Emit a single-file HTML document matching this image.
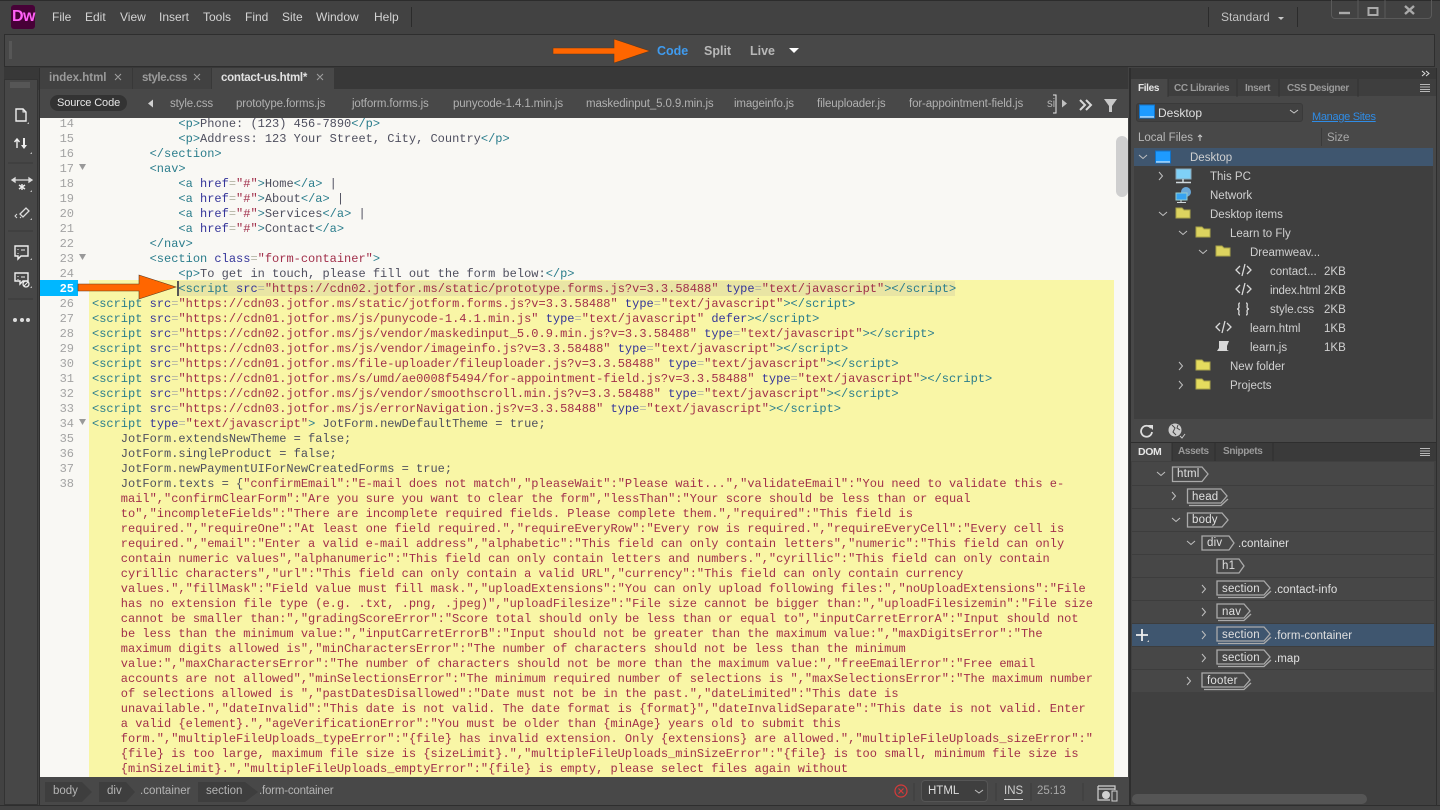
<!DOCTYPE html>
<html><head><meta charset="utf-8"><title>Dreamweaver</title>
<style>
html,body{margin:0;padding:0;width:1440px;height:810px;overflow:hidden;background:#424242}
body{position:relative;font-family:"Liberation Sans",sans-serif;font-size:12px;color:#ccc}
.x{position:absolute;white-space:nowrap;line-height:16px;z-index:2}
.b{position:absolute}
svg{position:absolute;left:0;top:0}
#code{position:absolute;left:92px;top:117px;font-family:"Liberation Mono",monospace;font-size:12px;line-height:15px;color:#4f4f5f}
#code div{height:15px;white-space:pre}
i{font-style:normal}
.t{color:#2b7d8c}.a{color:#35359a}.s{color:#a12f4b}.e{color:#b5b5a5}
.n{position:absolute;left:40px;width:34px;margin-top:1px;text-align:right;font-family:"Liberation Mono",monospace;font-size:12px;line-height:15px;color:#a3a3a3}
.m{font-size:12px;color:#d4d4d4;top:9px}
.f{top:96px;color:#b0b0b0;font-size:11.5px;letter-spacing:-.12px}
.r{color:#d0d0d0;font-size:11.5px;margin-top:1px}
.z{color:#d0d0d0;font-size:11.5px;left:1324px;margin-top:1px}
.d{color:#e0e0e0;font-size:11.5px;letter-spacing:.05px;margin-top:1px}
.h{color:#e0e0e0;font-size:11.5px;letter-spacing:.2px;margin-top:1px}
.pt{font-weight:bold;font-size:10px;letter-spacing:-.35px;color:#9a9a9a}
</style></head><body>
<!-- frames -->
<div class="b" style="left:0;top:0;width:1440px;height:1px;background:#2c2c2c"></div>
<div class="b" style="left:4px;top:34px;width:1431px;height:33px;background:#484848;border-top:1px solid #2e2e2e;border-bottom:1px solid #2e2e2e;border-left:1px solid #2e2e2e;border-right:1px solid #2e2e2e;box-sizing:border-box"></div>
<div class="b" style="left:4px;top:67px;width:1124px;height:23px;background:#383838"></div>
<div class="b" style="left:1131px;top:68px;width:305px;height:11px;background:#383838"></div>
<div class="b" style="left:0;top:79px;width:38px;height:731px;background:#424242"></div>
<div class="b" style="left:4px;top:79px;width:34px;height:726px;background:#474747;border:1px solid #333;box-sizing:border-box"></div>
<div class="b" style="left:39px;top:68px;width:1px;height:737px;background:#2e2e2e"></div>
<div class="b" style="left:0;top:805px;width:1440px;height:5px;background:#424242;border-top:1px solid #2e2e2e;box-sizing:border-box"></div>
<div class="b" style="left:1436px;top:68px;width:1px;height:737px;background:#2e2e2e"></div>
<div class="b" style="left:1129px;top:68px;width:2px;height:737px;background:#2e2e2e"></div>

<!-- title bar -->
<div class="b" style="left:11px;top:5px;width:24px;height:24px;background:#470137;border-radius:3px"></div>
<div class="x" style="left:12px;top:8px;width:22px;text-align:center;font-weight:bold;font-size:16px;line-height:18px;color:#ff61f6;letter-spacing:-.5px">Dw</div>
<div class="x m" style="left:52px">File</div>
<div class="x m" style="left:85px">Edit</div>
<div class="x m" style="left:120px">View</div>
<div class="x m" style="left:159px">Insert</div>
<div class="x m" style="left:203px">Tools</div>
<div class="x m" style="left:245px">Find</div>
<div class="x m" style="left:282px">Site</div>
<div class="x m" style="left:316px">Window</div>
<div class="x m" style="left:374px">Help</div>
<div class="b" style="left:411px;top:7px;width:1px;height:20px;background:#2b2b2b"></div>
<div class="b" style="left:1208px;top:7px;width:1px;height:20px;background:#2b2b2b"></div>
<div class="b" style="left:1297px;top:7px;width:1px;height:20px;background:#2b2b2b"></div>
<div class="x" style="left:1221px;top:9px;color:#c4c4c4">Standard</div>
<div class="b" style="left:1331px;top:0;width:101px;height:19px;border:1px solid #5a5a5a;border-top:0;border-radius:0 0 4px 4px;box-sizing:border-box"></div>

<!-- view switch -->
<div class="x" style="left:657px;top:43px;font-weight:bold;font-size:12.5px;color:#3f9bef">Code</div>
<div class="x" style="left:704px;top:43px;font-weight:bold;font-size:12.5px;color:#b8b8b8">Split</div>
<div class="x" style="left:750px;top:43px;font-weight:bold;font-size:12.5px;color:#b8b8b8">Live</div>

<!-- document tabs -->
<div class="b" style="left:40px;top:68px;width:92px;height:21px;background:#414141"></div>
<div class="b" style="left:133px;top:68px;width:78px;height:21px;background:#414141"></div>
<div class="b" style="left:212px;top:68px;width:122px;height:21px;background:#484848"></div>
<div class="x" style="left:49px;top:70px;font-weight:bold;font-size:11.5px;color:#9b9b9b">index.html</div>
<div class="x" style="left:142px;top:70px;font-weight:bold;font-size:11.5px;letter-spacing:-.4px;color:#9b9b9b">style.css</div>
<div class="x" style="left:221px;top:70px;font-weight:bold;font-size:11.5px;letter-spacing:-.25px;color:#e2e2e2">contact-us.html*</div>
<!-- related files -->
<div class="b" style="left:40px;top:89px;width:1089px;height:29px;background:#484848"></div>
<div class="b" style="left:50px;top:95px;width:77px;height:16px;background:#333;border-radius:8px"></div>
<div class="x" style="left:57px;top:95px;font-size:11px;letter-spacing:-.1px;color:#e6e6e6">Source Code</div>
<div class="x f" style="left:170px">style.css</div>
<div class="x f" style="left:236px">prototype.forms.js</div>
<div class="x f" style="left:352px">jotform.forms.js</div>
<div class="x f" style="left:453px">punycode-1.4.1.min.js</div>
<div class="x f" style="left:586px">maskedinput_5.0.9.min.js</div>
<div class="x f" style="left:734px">imageinfo.js</div>
<div class="x f" style="left:817px">fileuploader.js</div>
<div class="x f" style="left:909px">for-appointment-field.js</div>
<div class="x f" style="left:1047px">si</div>

<!-- editor -->
<div class="b" style="left:40px;top:118px;width:1088px;height:659px;background:#f9f8f4;overflow:hidden"></div>
<div class="b" style="left:89px;top:280px;width:1025px;height:497px;background:#f9f6a6"></div>
<div class="b" style="left:179px;top:281px;width:776px;height:15px;background:#e9e5a4"></div>
<div class="b" style="left:40px;top:280px;width:38px;height:16px;background:#00b7ff"></div>
<div class="b" style="left:177px;top:281px;width:2px;height:15px;background:#555"></div>
<div class="b" style="left:1116px;top:136px;width:12px;height:61px;background:#cfcfcf;border-radius:6px"></div>

<div class="n" style="top:116px">14</div><div class="n" style="top:131px">15</div><div class="n" style="top:146px">16</div><div class="n" style="top:161px">17</div><div class="n" style="top:176px">18</div><div class="n" style="top:191px">19</div><div class="n" style="top:206px">20</div><div class="n" style="top:221px">21</div><div class="n" style="top:236px">22</div><div class="n" style="top:251px">23</div><div class="n" style="top:266px">24</div><div class="n" style="top:281px;color:#fff;font-weight:bold">25</div><div class="n" style="top:296px">26</div><div class="n" style="top:311px">27</div><div class="n" style="top:326px">28</div><div class="n" style="top:341px">29</div><div class="n" style="top:356px">30</div><div class="n" style="top:371px">31</div><div class="n" style="top:386px">32</div><div class="n" style="top:401px">33</div><div class="n" style="top:416px">34</div><div class="n" style="top:431px">35</div><div class="n" style="top:446px">36</div><div class="n" style="top:461px">37</div><div class="n" style="top:476px">38</div>

<div id="code" style="height:660px;overflow:hidden;width:1024px">
<div>            <i class="t">&lt;p&gt;</i>Phone: (123) 456-7890<i class="t">&lt;/p&gt;</i></div>
<div>            <i class="t">&lt;p&gt;</i>Address: 123 Your Street, City, Country<i class="t">&lt;/p&gt;</i></div>
<div>        <i class="t">&lt;/section&gt;</i></div>
<div>        <i class="t">&lt;nav&gt;</i></div>
<div>            <i class="t">&lt;a</i> <i class="a">href</i><i class="e">=</i><i class="s">"#"</i><i class="t">&gt;</i>Home<i class="t">&lt;/a&gt;</i> |</div>
<div>            <i class="t">&lt;a</i> <i class="a">href</i><i class="e">=</i><i class="s">"#"</i><i class="t">&gt;</i>About<i class="t">&lt;/a&gt;</i> |</div>
<div>            <i class="t">&lt;a</i> <i class="a">href</i><i class="e">=</i><i class="s">"#"</i><i class="t">&gt;</i>Services<i class="t">&lt;/a&gt;</i> |</div>
<div>            <i class="t">&lt;a</i> <i class="a">href</i><i class="e">=</i><i class="s">"#"</i><i class="t">&gt;</i>Contact<i class="t">&lt;/a&gt;</i></div>
<div>        <i class="t">&lt;/nav&gt;</i></div>
<div>        <i class="t">&lt;section</i> <i class="a">class</i><i class="e">=</i><i class="s">"form-container"</i><i class="t">&gt;</i></div>
<div>            <i class="t">&lt;p&gt;</i>To get in touch, please fill out the form below:<i class="t">&lt;/p&gt;</i></div>
<div>            <i class="t">&lt;script</i> <i class="a">src</i><i class="e">=</i><i class="s">"https://cdn02.jotfor.ms/static/prototype.forms.js?v=3.3.58488"</i> <i class="a">type</i><i class="e">=</i><i class="s">"text/javascript"</i><i class="t">&gt;&lt;/script&gt;</i></div>
<div><i class="t">&lt;script</i> <i class="a">src</i><i class="e">=</i><i class="s">"https://cdn03.jotfor.ms/static/jotform.forms.js?v=3.3.58488"</i> <i class="a">type</i><i class="e">=</i><i class="s">"text/javascript"</i><i class="t">&gt;&lt;/script&gt;</i></div>
<div><i class="t">&lt;script</i> <i class="a">src</i><i class="e">=</i><i class="s">"https://cdn01.jotfor.ms/js/punycode-1.4.1.min.js"</i> <i class="a">type</i><i class="e">=</i><i class="s">"text/javascript"</i> <i class="a">defer</i><i class="t">&gt;&lt;/script&gt;</i></div>
<div><i class="t">&lt;script</i> <i class="a">src</i><i class="e">=</i><i class="s">"https://cdn02.jotfor.ms/js/vendor/maskedinput_5.0.9.min.js?v=3.3.58488"</i> <i class="a">type</i><i class="e">=</i><i class="s">"text/javascript"</i><i class="t">&gt;&lt;/script&gt;</i></div>
<div><i class="t">&lt;script</i> <i class="a">src</i><i class="e">=</i><i class="s">"https://cdn03.jotfor.ms/js/vendor/imageinfo.js?v=3.3.58488"</i> <i class="a">type</i><i class="e">=</i><i class="s">"text/javascript"</i><i class="t">&gt;&lt;/script&gt;</i></div>
<div><i class="t">&lt;script</i> <i class="a">src</i><i class="e">=</i><i class="s">"https://cdn01.jotfor.ms/file-uploader/fileuploader.js?v=3.3.58488"</i> <i class="a">type</i><i class="e">=</i><i class="s">"text/javascript"</i><i class="t">&gt;&lt;/script&gt;</i></div>
<div><i class="t">&lt;script</i> <i class="a">src</i><i class="e">=</i><i class="s">"https://cdn01.jotfor.ms/s/umd/ae0008f5494/for-appointment-field.js?v=3.3.58488"</i> <i class="a">type</i><i class="e">=</i><i class="s">"text/javascript"</i><i class="t">&gt;&lt;/script&gt;</i></div>
<div><i class="t">&lt;script</i> <i class="a">src</i><i class="e">=</i><i class="s">"https://cdn02.jotfor.ms/js/vendor/smoothscroll.min.js?v=3.3.58488"</i> <i class="a">type</i><i class="e">=</i><i class="s">"text/javascript"</i><i class="t">&gt;&lt;/script&gt;</i></div>
<div><i class="t">&lt;script</i> <i class="a">src</i><i class="e">=</i><i class="s">"https://cdn03.jotfor.ms/js/errorNavigation.js?v=3.3.58488"</i> <i class="a">type</i><i class="e">=</i><i class="s">"text/javascript"</i><i class="t">&gt;&lt;/script&gt;</i></div>
<div><i class="t">&lt;script</i> <i class="a">type</i><i class="e">=</i><i class="s">"text/javascript"</i><i class="t">&gt;</i> JotForm.newDefaultTheme = true;</div>
<div>    JotForm.extendsNewTheme = false;</div>
<div>    JotForm.singleProduct = false;</div>
<div>    JotForm.newPaymentUIForNewCreatedForms = true;</div>
<div>    JotForm.texts = {<i class="s">"confirmEmail":"E-mail does not match","pleaseWait":"Please wait...","validateEmail":"You need to validate this e-</i></div>
<div class="s">    mail","confirmClearForm":"Are you sure you want to clear the form","lessThan":"Your score should be less than or equal</div>
<div class="s">    to","incompleteFields":"There are incomplete required fields. Please complete them.","required":"This field is</div>
<div class="s">    required.","requireOne":"At least one field required.","requireEveryRow":"Every row is required.","requireEveryCell":"Every cell is</div>
<div class="s">    required.","email":"Enter a valid e-mail address","alphabetic":"This field can only contain letters","numeric":"This field can only</div>
<div class="s">    contain numeric values","alphanumeric":"This field can only contain letters and numbers.","cyrillic":"This field can only contain</div>
<div class="s">    cyrillic characters","url":"This field can only contain a valid URL","currency":"This field can only contain currency</div>
<div class="s">    values.","fillMask":"Field value must fill mask.","uploadExtensions":"You can only upload following files:","noUploadExtensions":"File</div>
<div class="s">    has no extension file type (e.g. .txt, .png, .jpeg)","uploadFilesize":"File size cannot be bigger than:","uploadFilesizemin":"File size</div>
<div class="s">    cannot be smaller than:","gradingScoreError":"Score total should only be less than or equal to","inputCarretErrorA":"Input should not</div>
<div class="s">    be less than the minimum value:","inputCarretErrorB":"Input should not be greater than the maximum value:","maxDigitsError":"The</div>
<div class="s">    maximum digits allowed is","minCharactersError":"The number of characters should not be less than the minimum</div>
<div class="s">    value:","maxCharactersError":"The number of characters should not be more than the maximum value:","freeEmailError":"Free email</div>
<div class="s">    accounts are not allowed","minSelectionsError":"The minimum required number of selections is ","maxSelectionsError":"The maximum number</div>
<div class="s">    of selections allowed is ","pastDatesDisallowed":"Date must not be in the past.","dateLimited":"This date is</div>
<div class="s">    unavailable.","dateInvalid":"This date is not valid. The date format is {format}","dateInvalidSeparate":"This date is not valid. Enter</div>
<div class="s">    a valid {element}.","ageVerificationError":"You must be older than {minAge} years old to submit this</div>
<div class="s">    form.","multipleFileUploads_typeError":"{file} has invalid extension. Only {extensions} are allowed.","multipleFileUploads_sizeError":"</div>
<div class="s">    {file} is too large, maximum file size is {sizeLimit}.","multipleFileUploads_minSizeError":"{file} is too small, minimum file size is</div>
<div class="s">    {minSizeLimit}.","multipleFileUploads_emptyError":"{file} is empty, please select files again without</div>
</div>

<!-- status bar -->
<div class="b" style="left:40px;top:777px;width:1089px;height:28px;background:#484848"></div>
<div class="x" style="left:53px;top:783px;color:#b4b4b4;font-size:11.5px">body</div>
<div class="x" style="left:107px;top:783px;color:#b4b4b4;font-size:11.5px">div</div>
<div class="x" style="left:140px;top:783px;color:#b4b4b4;font-size:11.5px">.container</div>
<div class="x" style="left:206px;top:783px;color:#b4b4b4;font-size:11.5px">section</div>
<div class="x" style="left:259px;top:783px;color:#b4b4b4;font-size:11.5px;letter-spacing:-.2px">.form-container</div>
<div class="b" style="left:921px;top:780px;width:67px;height:22px;background:#3f3f3f;border:1px solid #555;border-radius:4px;box-sizing:border-box"></div>
<div class="x" style="left:928px;top:783px;color:#dcdcdc;font-size:11.5px">HTML</div>
<div class="x" style="left:1004px;top:783px;color:#d0d0d0;font-size:11.5px">INS</div>
<div class="b" style="left:1004px;top:799px;width:19px;height:1px;background:#ccc"></div>
<div class="x" style="left:1037px;top:783px;color:#a8a8a8;font-size:11.5px">25:13</div>

<!-- right panel : files -->
<div class="b" style="left:1131px;top:79px;width:305px;height:363px;background:#484848"></div>
<div class="b" style="left:1131px;top:79px;width:305px;height:17px;background:#3e3e3e"></div>
<div class="b" style="left:1131px;top:79px;width:37px;height:18px;background:#484848"></div>
<div class="x pt" style="left:1138px;top:81px;color:#e6e6e6">Files</div>
<div class="x pt" style="left:1174px;top:81px">CC Libraries</div>
<div class="x pt" style="left:1245px;top:81px">Insert</div>
<div class="x pt" style="left:1287px;top:81px">CSS Designer</div>
<div class="b" style="left:1136px;top:103px;width:167px;height:19px;background:#414141;border:1px solid #3a3a3a;border-radius:3px;box-sizing:border-box"></div>
<div class="x" style="left:1158px;top:105px;color:#e0e0e0">Desktop</div>
<div class="x" style="left:1312px;top:109px;color:#2f8ce6;font-size:11px;letter-spacing:-.3px;text-decoration:underline">Manage Sites</div>
<div class="x" style="left:1138px;top:130px;color:#b8b8b8;font-size:11.5px">Local Files</div>
<div class="x" style="left:1327px;top:130px;color:#a8a8a8;font-size:11.5px">Size</div>
<div class="b" style="left:1321px;top:128px;width:1px;height:18px;background:#3a3a3a"></div>
<div class="b" style="left:1134px;top:148px;width:299px;height:271px;background:#3f3f3f"></div>
<div class="b" style="left:1134px;top:148px;width:299px;height:18px;background:#3f566f"></div>
<div class="x r" style="left:1190px;top:149px">Desktop</div>
<div class="x r" style="left:1210px;top:168px">This PC</div>
<div class="x r" style="left:1210px;top:187px">Network</div>
<div class="x r" style="left:1210px;top:206px">Desktop items</div>
<div class="x r" style="left:1230px;top:225px">Learn to Fly</div>
<div class="x r" style="left:1250px;top:244px">Dreamweav...</div>
<div class="x r" style="left:1270px;top:263px">contact...</div>
<div class="x r" style="left:1270px;top:282px;letter-spacing:-.2px">index.html</div>
<div class="x r" style="left:1270px;top:301px">style.css</div>
<div class="x r" style="left:1250px;top:320px">learn.html</div>
<div class="x r" style="left:1250px;top:339px">learn.js</div>
<div class="x r" style="left:1230px;top:358px">New folder</div>
<div class="x r" style="left:1230px;top:377px">Projects</div>
<div class="x z" style="top:263px">2KB</div>
<div class="x z" style="top:282px">2KB</div>
<div class="x z" style="top:301px">2KB</div>
<div class="x z" style="top:320px">1KB</div>
<div class="x z" style="top:339px">1KB</div>

<!-- right panel : DOM -->
<div class="b" style="left:1131px;top:442px;width:305px;height:363px;background:#404040;border-top:1px solid #2e2e2e;box-sizing:border-box"></div>
<div class="b" style="left:1131px;top:443px;width:305px;height:18px;background:#3a3a3a"></div>
<div class="b" style="left:1131px;top:443px;width:41px;height:18px;background:#484848"></div>
<div class="x pt" style="left:1138px;top:444px;color:#e6e6e6;font-size:10.5px">DOM</div>
<div class="x pt" style="left:1178px;top:444px">Assets</div>
<div class="x pt" style="left:1223px;top:444px">Snippets</div>
<div class="b" style="left:1132px;top:462px;width:302px;height:230px;background:#474747"></div>
<div class="b" style="left:1132px;top:624px;width:302px;height:22px;background:#3f566f"></div>
<div class="b" style="left:1132px;top:794px;width:235px;height:10px;background:#555;border-radius:5px"></div>
<div class="x h" style="left:1177px;top:465px">html</div>
<div class="x h" style="left:1192px;top:488px">head</div>
<div class="x h" style="left:1192px;top:511px">body</div>
<div class="x h" style="left:1207px;top:534px">div</div>
<div class="x d" style="left:1238px;top:535px">.container</div>
<div class="x h" style="left:1222px;top:557px">h1</div>
<div class="x h" style="left:1222px;top:580px">section</div>
<div class="x d" style="left:1274px;top:581px">.contact-info</div>
<div class="x h" style="left:1222px;top:603px">nav</div>
<div class="x h" style="left:1222px;top:626px">section</div>
<div class="x d" style="left:1274px;top:627px">.form-container</div>
<div class="x h" style="left:1222px;top:649px">section</div>
<div class="x d" style="left:1274px;top:650px">.map</div>
<div class="x h" style="left:1207px;top:672px">footer</div>

<!-- vector overlay -->
<svg width="1440" height="810" viewBox="0 0 1440 810" fill="none">
<!-- window buttons -->
<path d="M1358 0V19M1385 0V19" stroke="#5a5a5a"/>
<path d="M1339 13H1350" stroke="#aaa" stroke-width="2.4"/>
<rect x="1368.5" y="8" width="9" height="7" stroke="#aaa" stroke-width="2"/>
<path d="M1405 6L1414 14M1414 6L1405 14" stroke="#aaa" stroke-width="2.4"/>
<path d="M1278 17h6l-3 3z" fill="#c8c8c8"/>
<path d="M789 48h10l-5 5z" fill="#fff"/>
<!-- grips -->
<path d="M9 42H12M9 44H12M9 46H12M9 48H12M9 50H12M9 52H12M9 54H12M9 56H12M9 58H12" stroke="#666"/>
<path d="M11 82V88M13 82V88M15 82V88M17 82V88M19 82V88M21 82V88M23 82V88M25 82V88M27 82V88M29 82V88" stroke="#666"/>
<!-- tab x -->
<path d="M115 74l6 6M121 74l-6 6M194 74l6 6M200 74l-6 6M317 74l6 6M323 74l-6 6" stroke="#a0a0a0"/>
<!-- toolbar right icons -->
<path d="M153 99.500v8l-5 -4z" fill="#d0d0d0"/>
<path d="M1062 99.500v8l5 -4z" fill="#c0c0c0"/>
<path d="M1053 95h3v18h-3" stroke="#e8e8e8"/>
<path d="M1080 100l5 5 -5 5M1086 100l5 5 -5 5" stroke="#d8d8d8" stroke-width="2"/>
<path d="M1104 99h13l-5 7v6l-3 0v-6z" fill="#c8c8c8"/>
<!-- left toolbar icons -->
<path d="M16 109h7l3 3v9H16z" stroke="#eee" stroke-width="1.400"/>
<path d="M23 109v3h3" stroke="#eee"/>
<path d="M17 148v-9M14.500 142l2.500 -3 2.500 3" stroke="#eee" stroke-width="1.400"/>
<path d="M24 138v9" stroke="#eee" stroke-width="2"/><path d="M21 145h6l-3 4z" fill="#eee"/>
<path d="M15 180h20M15 180l3 -2v4zM35 180l-3 -2v4z" stroke="#ddd" stroke-width="1.300" transform="translate(-3 0)"/>
<path d="M22 184v6M19 185l6 4M25 185l-6 4" stroke="#eee" stroke-width="1.400"/>
<path d="M20 214l6 -6 3 3 -6 6z" stroke="#ddd" stroke-width="1.300"/>
<path d="M17 214l-2 2 2 2M21 218l-1 -1" stroke="#ddd"/>
<path d="M15 246h13v10h-7l-3 3v-3h-3z" stroke="#eee" stroke-width="1.400"/>
<path d="M18 249v1M18 253v1M21 250h4" stroke="#eee"/>
<path d="M15 273h13v8h-5l-3 3v-3h-5z" stroke="#eee" stroke-width="1.400"/>
<path d="M18 276v1M18 279v1M21 277h4" stroke="#eee"/>
<circle cx="26" cy="284" r="3" stroke="#eee" stroke-width="1.300"/><path d="M24 286l4 -4" stroke="#eee"/>
<circle cx="15" cy="320" r="2" fill="#ddd"/><circle cx="22" cy="320" r="2" fill="#ddd"/><circle cx="28" cy="320" r="2" fill="#ddd"/>
<path d="M8 163H33M8 231H33M8 299H33" stroke="#3a3a3a"/>
<path d="M29 122v2h-2zM32 152v2h-2zM32 190v2h-2zM32 218v2h-2zM32 258v2h-2zM32 286v2h-2z" fill="#bbb"/>
<!-- fold markers -->
<path d="M79 164h7l-3.500 6z" fill="#999"/><path d="M79 254h7l-3.500 6z" fill="#999"/><path d="M79 419h7l-3.500 6z" fill="#999"/>
<!-- breadcrumbs -->
<path d="M45 782h37l10 10 -10 10H45z" fill="#3e3e3e"/>
<path d="M99 782h27l9 10 -9 10H99z" fill="#3e3e3e"/>
<path d="M198 782h47l13 10 -13 10H198z" fill="#3e3e3e"/>
<!-- status icons -->
<circle cx="901" cy="791" r="6" stroke="#d63a3a" stroke-width="1.200"/><path d="M898.500 788.500l5 5M903.500 788.500l-5 5" stroke="#d63a3a" stroke-width="1.200"/>
<path d="M914 783V801M996 783V801M1031 783V801M1083 783V801" stroke="#3c3c3c"/>
<path d="M975 790l4 3 4 -3" stroke="#c0c0c0"/>
<path d="M1098 786h17v4M1098 786v14h12M1098 789h17" stroke="#d0d0d0" stroke-width="1.200"/>
<circle cx="1106" cy="795" r="4" fill="#d0d0d0"/>
<rect x="1112" y="791" width="5" height="10" fill="#484848" stroke="#d0d0d0"/>
<!-- right panel top -->
<path d="M1422 71l3 2.500 -3 2.500M1426 71l3 2.500 -3 2.500" stroke="#ddd"/>
<path d="M1420 84.500H1430M1420 87H1430M1420 89.500H1430M1420 91.500H1430" stroke="#b8b8b8"/>
<path d="M1420 448.500H1430M1420 451H1430M1420 453.500H1430M1420 455.500H1430" stroke="#b8b8b8"/>
<path d="M1168 79V97M1237 79V97M1279 79V97M1358 79V97" stroke="#333"/>
<path d="M1172 443V461M1215 443V461M1273 443V461" stroke="#2f2f2f"/>
<path d="M1293 110l4 3 4 -3" stroke="#c8c8c8" transform="translate(-3 0)"/>
<path d="M1200 135v6M1198 137l2 -2 2 2" stroke="#ccc"/>
<!-- desktop icons -->
<rect x="1139.500" y="105" width="15" height="13" fill="#1e9bff" stroke="#1173c9"/><path d="M1140 117h14" stroke="#fff"/>
<rect x="1155.500" y="151" width="15" height="12" fill="#1e9bff" stroke="#1173c9"/><path d="M1156 162h14" stroke="#fff"/>
<!-- This PC -->
<rect x="1176" y="169" width="15" height="10" fill="#7fd0f7" stroke="#8ab"/><path d="M1183 179v3M1176 182.500H1191" stroke="#cfd8dc" stroke-width="1.500"/>
<!-- Network -->
<circle cx="1186" cy="192" r="5" fill="#6aa8d8"/><rect x="1176" y="193" width="11" height="7" fill="#36a3f0" stroke="#9cc"/><path d="M1181 200v2M1177 202.500H1186" stroke="#cfd8dc"/>
<!-- folders -->
<path d="M1176 208h6l2 2h6v8h-14z" fill="#dcd35f" stroke="#a9a34a"/>
<path d="M1196 227h6l2 2h6v8h-14z" fill="#dcd35f" stroke="#a9a34a"/>
<path d="M1216 246h6l2 2h6v8h-14z" fill="#dcd35f" stroke="#a9a34a"/>
<path d="M1196 360h6l2 2h6v8h-14z" fill="#e5dc5e" stroke="#a9a34a"/>
<path d="M1196 379h6l2 2h6v8h-14z" fill="#e5dc5e" stroke="#a9a34a"/>
<!-- tree chevrons -->
<path d="M1139 155l4 3.500 4 -3.500" stroke="#c0c0c0"/>
<path d="M1159 172l3.500 4 -3.500 4" stroke="#c0c0c0"/>
<path d="M1159 212l4 3.500 4 -3.500" stroke="#c0c0c0"/>
<path d="M1179 231l4 3.500 4 -3.500" stroke="#c0c0c0"/>
<path d="M1199 250l4 3.500 4 -3.500" stroke="#c0c0c0"/>
<path d="M1179 362l3.500 4 -3.500 4" stroke="#c0c0c0"/>
<path d="M1179 381l3.500 4 -3.500 4" stroke="#c0c0c0"/>
<!-- file icons -->
<g stroke="#d8d8d8" stroke-width="1.300">
<path d="M1240 266l-4 4 4 4M1247 266l4 4 -4 4M1245 264l-3 12"/>
<path d="M1240 285l-4 4 4 4M1247 285l4 4 -4 4M1245 283l-3 12"/>
<path d="M1220 323l-4 4 4 4M1227 323l4 4 -4 4M1225 321l-3 12"/>
<path d="M1240 303c-2 0-1 3-1 4s-1 2-2 2c1 0 2 1 2 2s-1 4 1 4M1246 303c2 0 1 3 1 4s1 2 2 2c-1 0-2 1-2 2s1 4-1 4"/>
</g>
<path d="M1219 341h10l-2 5v4l2 1h-12l2-3z" fill="#d8d8d8"/>
<!-- files bottom icons -->
<path d="M1151 428a5.500 5.500 0 1 0 1 4" stroke="#ddd" stroke-width="1.800"/><path d="M1148 425l5 0 0 5z" fill="#ddd"/>
<circle cx="1175" cy="430" r="6.500" fill="#ccc"/><path d="M1172 425l3 3-2 4 3 3M1178 425l-1 3 3 2" stroke="#484848"/>
<path d="M1180 436l2 2 3-4" stroke="#ccc"/>
<!-- DOM tree chevrons -->
<path d="M1157 472l4 3.500 4 -3.500" stroke="#c0c0c0"/>
<path d="M1172 492l3.500 4 -3.500 4" stroke="#c0c0c0"/>
<path d="M1172 518l4 3.500 4 -3.500" stroke="#c0c0c0"/>
<path d="M1187 541l4 3.500 4 -3.500" stroke="#c0c0c0"/>
<path d="M1202 585l3.500 4 -3.500 4M1202 608l3.500 4 -3.500 4M1202 631l3.500 4 -3.500 4M1202 654l3.500 4 -3.500 4M1187 677l3.500 4 -3.500 4" stroke="#c0c0c0"/>
<!-- DOM row separators -->
<path d="M1132 485.500H1434M1132 508.500H1434M1132 531.500H1434M1132 554.500H1434M1132 577.500H1434M1132 600.500H1434M1132 623.500H1434M1132 646.500H1434M1132 669.500H1434" stroke="#3d3d3d"/>
<!-- DOM tags -->
<g stroke="#aaa" stroke-width="1.300">
<path d="M1202 467H1172.500V481.500H1202L1208 474Z"/>
<path d="M1221 489H1187.500V503H1221L1227 496Z"/><path d="M1189 505.500H1221L1228 499"/>
<path d="M1222 513H1187.500V527H1222L1228 520Z"/>
<path d="M1229 536H1202V550H1229L1234 543Z"/>
<path d="M1239 559H1217V573H1239L1244 566Z"/>
<path d="M1264 581H1217V595H1264L1270 588Z"/><path d="M1218 597.500H1264L1271 591"/>
<path d="M1244 604H1217V618H1244L1250 611Z"/><path d="M1218 620.500H1244L1251 614"/>
<path d="M1264 627H1217V641H1264L1270 634Z"/><path d="M1218 643.500H1264L1271 637"/>
<path d="M1264 650H1217V664H1264L1270 657Z"/><path d="M1218 666.500H1264L1271 660"/>
<path d="M1244 673H1202V687H1244L1250 680Z"/><path d="M1204 689.500H1244L1251 683"/>
</g>
<!-- DOM plus -->
<path d="M1136 635H1148M1142 629V641" stroke="#eee" stroke-width="1.800"/><path d="M1149 640v2h-2z" fill="#ccc"/>
<!-- orange arrows -->
<path d="M553 48h61v-9l36 12 -36 12v-9h-61z" fill="#ff6600" stroke="#5a3a20" stroke-width=".6"/>
<path d="M78 284h61v-9l37 12 -37 12v-8h-61z" fill="#ff6600" stroke="#5a3a20" stroke-width=".6"/>
</svg>
</body></html>
